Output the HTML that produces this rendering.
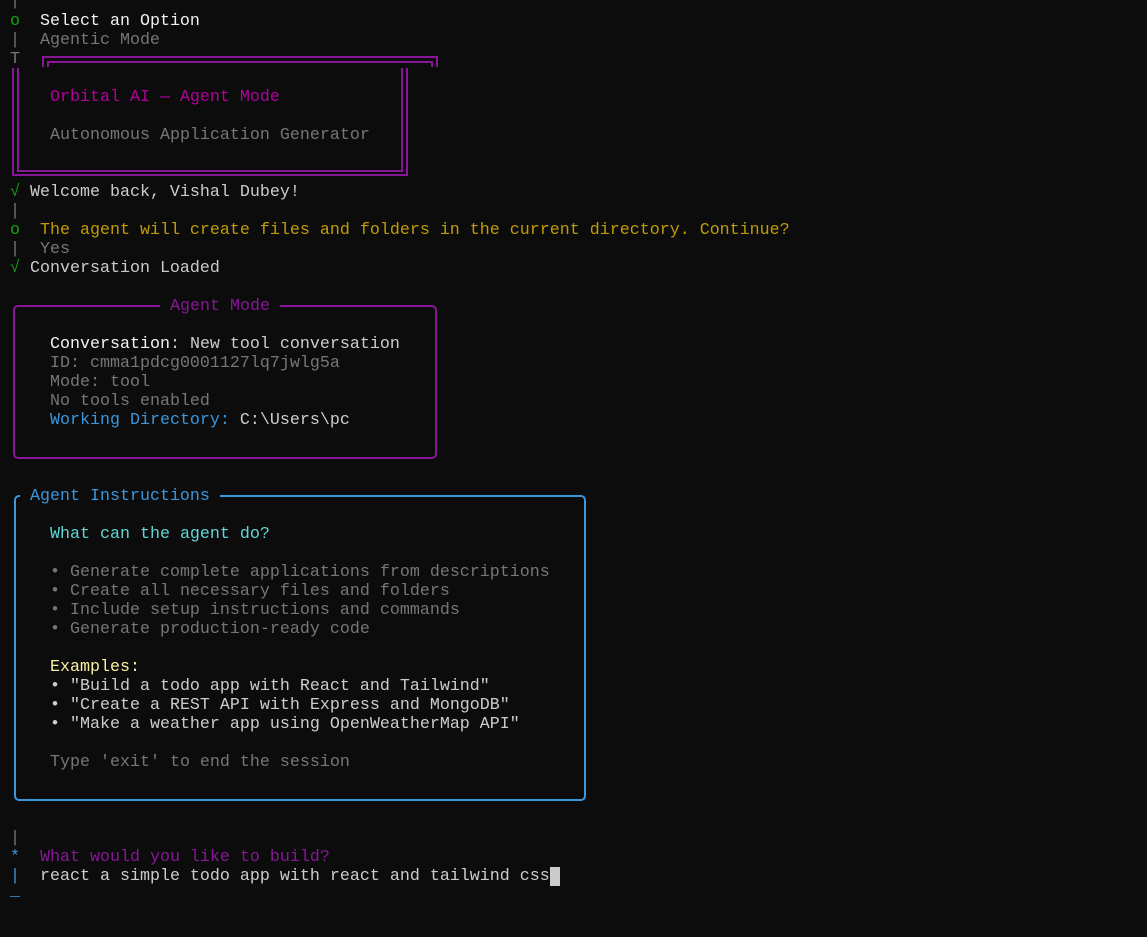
<!DOCTYPE html>
<html><head><meta charset="utf-8"><style>
html,body{margin:0;padding:0;background:#0c0c0c;width:1147px;height:937px;overflow:hidden}
body{font-family:"Liberation Mono","DejaVu Sans Mono",monospace;font-size:16.67px;color:#cccccc;position:relative}
.l{position:absolute;height:19px;line-height:19px;white-space:pre;margin-top:2px}
.g{color:#767676}.gr{color:#13a10e}.y{color:#c19c00}.m{color:#b4009e}.p{color:#881798}
.b{color:#3a96dd}.c{color:#61d6d6}.ly{color:#f9f1a5}.w{color:#f2f2f2}
.box{position:absolute;box-sizing:border-box}
</style></head><body>
<div class="l g" style="left:10px;top:-10px">|</div>
<div class="l gr" style="left:10px;top:10px">o</div><div class="l w" style="left:40px;top:10px">Select an Option</div>
<div class="l g" style="left:10px;top:29px">|  Agentic Mode</div>
<div class="l g" style="left:10px;top:48px">T</div>
<div class="box" style="left:42px;top:56px;width:396px;height:11px;border:2px solid #881798;border-bottom:none"></div>
<div class="box" style="left:47px;top:61px;width:386px;height:6px;border:2px solid #881798;border-bottom:none"></div>
<div class="box" style="left:12px;top:68px;width:396px;height:108px;border:2px solid #881798;border-top:none"></div>
<div class="box" style="left:17px;top:68px;width:386px;height:104px;border:2px solid #881798;border-top:none"></div>
<div class="l m" style="left:50px;top:86px">Orbital AI — Agent Mode</div>
<div class="l g" style="left:50px;top:124px">Autonomous Application Generator</div>
<div class="l gr" style="left:10px;top:181px">√</div><div class="l" style="left:30px;top:181px">Welcome back, Vishal Dubey!</div>
<div class="l g" style="left:10px;top:200px">|</div>
<div class="l gr" style="left:10px;top:219px">o</div><div class="l y" style="left:40px;top:219px">The agent will create files and folders in the current directory. Continue?</div>
<div class="l g" style="left:10px;top:238px">|  Yes</div>
<div class="l gr" style="left:10px;top:257px">√</div><div class="l" style="left:30px;top:257px">Conversation Loaded</div>

<div class="box" style="left:13px;top:305px;width:424px;height:154px;border:2px solid #881798;border-radius:5px"></div>
<div class="l p" style="top:295px;background:#0c0c0c;padding:0 10px;left:160px">Agent Mode</div>
<div class="l" style="left:50px;top:333px"><span class="w">Conversation</span>: New tool conversation</div>
<div class="l g" style="left:50px;top:352px">ID: cmma1pdcg0001127lq7jwlg5a</div>
<div class="l g" style="left:50px;top:371px">Mode: tool</div>
<div class="l g" style="left:50px;top:390px">No tools enabled</div>
<div class="l" style="left:50px;top:409px"><span class="b">Working Directory:</span> C:\Users\pc</div>

<div class="box" style="left:14px;top:495px;width:572px;height:306px;border:2px solid #3a96dd;border-radius:5px"></div>
<div class="l b" style="left:20px;top:485px;background:#0c0c0c;padding:0 10px">Agent Instructions</div>
<div class="l c" style="left:50px;top:523px">What can the agent do?</div>
<div class="l g" style="left:50px;top:561px">• Generate complete applications from descriptions</div>
<div class="l g" style="left:50px;top:580px">• Create all necessary files and folders</div>
<div class="l g" style="left:50px;top:599px">• Include setup instructions and commands</div>
<div class="l g" style="left:50px;top:618px">• Generate production-ready code</div>
<div class="l ly" style="left:50px;top:656px">Examples:</div>
<div class="l" style="left:50px;top:675px">• "Build a todo app with React and Tailwind"</div>
<div class="l" style="left:50px;top:694px">• "Create a REST API with Express and MongoDB"</div>
<div class="l" style="left:50px;top:713px">• "Make a weather app using OpenWeatherMap API"</div>
<div class="l g" style="left:50px;top:751px">Type 'exit' to end the session</div>

<div class="l g" style="left:10px;top:827px">|</div>
<div class="l b" style="left:10px;top:846px">*</div><div class="l p" style="left:40px;top:846px">What would you like to build?</div>
<div class="l b" style="left:10px;top:865px">|</div><div class="l" style="left:40px;top:865px">react a simple todo app with react and tailwind css<span style="background:#cccccc;color:#0c0c0c"> </span></div>
<div class="l b" style="left:10px;top:880px">_</div>
</body></html>
